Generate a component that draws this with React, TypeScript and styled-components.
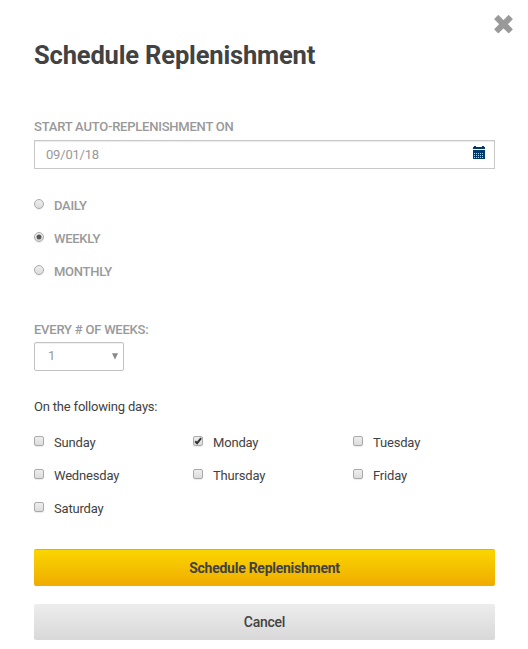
import React, { useState } from "react";
import styled, { createGlobalStyle } from "styled-components";

const GlobalStyle = createGlobalStyle`
  * { box-sizing: border-box; }
  body {
    margin: 0;
    background: #fff;
    color: #424242;
    font: 400 13px/20px Roboto, "Liberation Sans", sans-serif;
  }
`;

const Dialog = styled.main`
  display: flex;
  flex-direction: column;
  width: 528px;
  height: 649px;
  padding: 14px 33px 0 34px;
  background: #fff;
`;

const CloseButton = styled.button`
  align-self: flex-end;
  width: 20px;
  height: 20px;
  margin-right: -19px;
  padding: 0;
  border: 0;
  background: none;
  cursor: pointer;
  svg { display: block; }
`;

const Title = styled.h1`
  margin: 6px 0 0;
  font-size: 25.5px;
  font-weight: 700;
  line-height: 30px;
  letter-spacing: -0.16px;
`;

const FieldLabel = styled.label<{ $top: number }>`
  margin-top: ${(p) => p.$top}px;
  color: #999;
  font-weight: 500;
  line-height: 20px;
  letter-spacing: -0.22px;
  text-transform: uppercase;
`;

const DateField = styled.div`
  display: flex;
  align-items: center;
  justify-content: space-between;
  height: 29px;
  margin-top: 3px;
  padding: 0 9px 0 11px;
  border: 1px solid #c8c8c8;
  box-shadow: inset 0 1px 1px rgba(0, 0, 0, 0.08);
  color: #999;
  letter-spacing: -0.2px;
  svg { display: block; margin-top: -4px; }
`;

const RadioList = styled.div`
  display: grid;
  grid-auto-rows: 33px;
  margin-top: 20px;
`;

const OptionLabel = styled.label<{ $caps?: boolean }>`
  display: flex;
  align-items: center;
  gap: 10px;
  color: ${(p) => (p.$caps ? "#999" : "#424242")};
  font-weight: ${(p) => (p.$caps ? 500 : 400)};
  text-transform: ${(p) => (p.$caps ? "uppercase" : "none")};
  letter-spacing: ${(p) => (p.$caps ? -0.27 : -0.18)}px;
  cursor: pointer;
`;

const Control = styled.input`
  appearance: none;
  display: grid;
  place-items: center;
  flex: none;
  width: 10px;
  height: 10px;
  margin: 0 0 3px;
  border: 1px solid #aaa;
  background: linear-gradient(#eee, #dcdcdc);
  box-shadow: 0 1px 1px rgba(0, 0, 0, 0.08);
`;

const Radio = styled(Control).attrs({ type: "radio" })`
  border-radius: 50%;
  &:checked::before {
    content: "";
    width: 4px;
    height: 4px;
    border-radius: 50%;
    background: #555;
    box-shadow: 0 0 0 0.5px #666;
  }
`;

const Checkbox = styled(Control).attrs({ type: "checkbox" })`
  border-radius: 2px;
`;

const CheckHolder = styled.span`
  position: relative;
  display: flex;
  svg {
    position: absolute;
    top: 0;
    left: 0;
    pointer-events: none;
  }
`;

const WeekSelect = styled.div`
  display: flex;
  align-items: center;
  justify-content: space-between;
  width: 90px;
  height: 29px;
  margin-top: 2px;
  padding: 0 5px 1px 13px;
  border: 1px solid #c2c2c2;
  border-radius: 2px;
  box-shadow: inset 0 1px 1px rgba(0, 0, 0, 0.06);
  color: #999;
`;

const DaysHeading = styled.p`
  margin: 26px 0 0;
  line-height: 20px;
  letter-spacing: -0.19px;
`;

const DayGrid = styled.div`
  display: grid;
  grid-template-columns: 159px 160px 1fr;
  grid-auto-rows: 33px;
  margin-top: 9px;
`;

const ActionButton = styled.button<{ $primary?: boolean }>`
  flex: none;
  height: ${(p) => (p.$primary ? 37 : 36)}px;
  margin-top: ${(p) => (p.$primary ? 24 : 18)}px;
  padding: 0;
  border: 0;
  border-top: ${(p) => (p.$primary ? "1px solid #f0ab00" : "0")};
  border-radius: 2px;
  background: ${(p) => (p.$primary ? "linear-gradient(#fad600, #f0ab00)" : "linear-gradient(#ededed, #d8d8d8)")};
  color: #424242;
  font: ${(p) => (p.$primary ? 700 : 500)} 14px/20px Roboto, "Liberation Sans", sans-serif;
  letter-spacing: -0.26px;
  cursor: pointer;
`;

function CloseIcon() {
  return (
    <svg width="20" height="20" viewBox="0 0 20 20">
      <path d="M4.3 1.7 9.5 6.9 14.7 1.7 18.1 5.1 13.1 10.2 18.1 15.3 14.7 18.7 9.5 13.5 4.3 18.7.9 15.3 5.9 10.2.9 5.1z" fill="#999" stroke="#999" strokeWidth="1.2" strokeLinejoin="round" />
    </svg>
  );
}

function CalendarIcon() {
  return (
    <svg width="12" height="13" viewBox="0 0 12 13" shapeRendering="crispEdges">
      <path d="M1 0h2v1h6V0h2v1h1v2H0V1h1zM0 4h12v9H0z" fill="#003a6c" />
      <path d="M1 7.5h10M1 9.5h10M1 11.5h10" stroke="#b9ced8" strokeDasharray="1 1" />
    </svg>
  );
}

function CheckIcon() {
  return (
    <svg width="10" height="10" viewBox="0 0 10 10">
      <path d="M2.2 5.2 4.1 7.2 8.1 2.2" fill="none" stroke="#333" strokeWidth="2" />
    </svg>
  );
}

function ArrowIcon() {
  return (
    <svg width="6" height="7" viewBox="0 0 6 7">
      <path d="M0 .3h6L3 6.5z" fill="#888" />
    </svg>
  );
}

const frequencies = ["Daily", "Weekly", "Monthly"];
const days = ["Sunday", "Monday", "Tuesday", "Wednesday", "Thursday", "Friday", "Saturday"];

export default function App() {
  const [frequency, setFrequency] = useState("Weekly");
  const [selected, setSelected] = useState(["Monday"]);
  const toggle = (day: string) =>
    setSelected((list) => (list.includes(day) ? list.filter((d) => d !== day) : [...list, day]));

  return (
    <>
      <GlobalStyle />
      <Dialog>
        <CloseButton aria-label="Close"><CloseIcon /></CloseButton>
        <Title>Schedule Replenishment</Title>
        <FieldLabel $top={47}>Start auto-replenishment on</FieldLabel>
        <DateField><span>09/01/18</span><CalendarIcon /></DateField>
        <RadioList>
          {frequencies.map((name) => (
            <OptionLabel key={name} $caps>
              <Radio name="frequency" checked={frequency === name} onChange={() => setFrequency(name)} />
              {name}
            </OptionLabel>
          ))}
        </RadioList>
        <FieldLabel $top={32}>Every # of weeks:</FieldLabel>
        <WeekSelect><span>1</span><ArrowIcon /></WeekSelect>
        <DaysHeading>On the following days:</DaysHeading>
        <DayGrid>
          {days.map((day) => (
            <OptionLabel key={day}>
              <CheckHolder>
                <Checkbox checked={selected.includes(day)} onChange={() => toggle(day)} />
                {selected.includes(day) && <CheckIcon />}
              </CheckHolder>
              {day}
            </OptionLabel>
          ))}
        </DayGrid>
        <ActionButton $primary>Schedule Replenishment</ActionButton>
        <ActionButton>Cancel</ActionButton>
      </Dialog>
    </>
  );
}
